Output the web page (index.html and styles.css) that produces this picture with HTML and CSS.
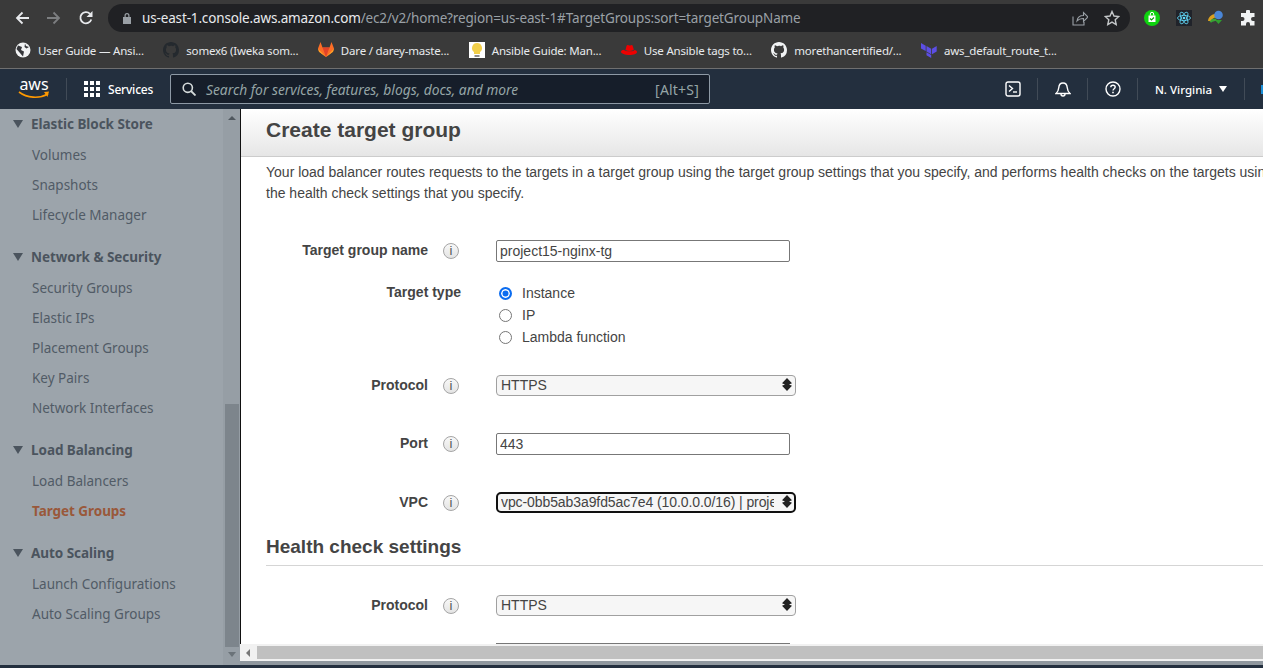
FILE: index.html
```html
<!DOCTYPE html>
<html>
<head>
<meta http-equiv="Content-Type" content="text/html; charset=utf-8"/>
<title>Create target group</title>
<link rel="stylesheet" href="styles.css">
</head>
<body>

<div class="browser">
  <div class="toolbar">
    <svg class="nav-icon" viewBox="0 0 16 16"><path d="M15 8H3M8.500 2.500 3 8l5.500 5.500" fill="none" stroke="#e8eaed" stroke-width="1.800"/></svg>
    <svg class="nav-icon" viewBox="0 0 16 16"><path d="M1 8h12M7.500 2.500 13 8l-5.500 5.500" fill="none" stroke="#7c7e80" stroke-width="1.800"/></svg>
    <svg class="nav-icon" viewBox="0 0 16 16"><path d="M13.300 9.500A5.600 5.600 0 1 1 12 3.800" fill="none" stroke="#e8eaed" stroke-width="1.800"/><path d="M14.500 1v6h-6z" fill="#e8eaed"/></svg>
    <div class="omnibox">
      <svg class="lock" viewBox="0 0 10 12"><path d="M2.500 5V3.500a2.500 2.500 0 0 1 5 0V5H9v7H1V5zM3.700 5h2.600V3.500a1.300 1.300 0 0 0-2.600 0z" fill="#9aa0a6"/></svg>
      <span class="url"><span class="url-host">us-east-1.console.aws.amazon.com</span>/ec2/v2/home?region=us-east-1#TargetGroups:sort=targetGroupName</span>
      <svg class="omni-icon" viewBox="0 0 16 16"><path d="M1 6.500V15h11v-3M5 11c.5-3.500 3-5.500 6.500-5.500V2.500L16 7l-4.500 4.500V8.500C8.500 8.500 6.500 9.300 5 11z" fill="none" stroke="#9aa0a6" stroke-width="1.100"/></svg>
      <svg class="omni-icon" viewBox="0 0 16 16"><path d="m8 1.500 2 4.500 4.800.5-3.600 3.200 1 4.800L8 12.100l-4.200 2.400 1-4.800L1.200 6.500 6 6z" fill="none" stroke="#c4c7c9" stroke-width="1.400"/></svg>
    </div>
    <div class="extensions">
      <svg class="ext" viewBox="0 0 16 16"><circle cx="8" cy="8" r="8" fill="#0fd30f"/><path d="M4.500 5.500h7v6.500h-7z" fill="#fff"/><path d="M6.300 5.500V4a1.700 1.700 0 0 1 3.400 0v1.500" fill="none" stroke="#fff"/><path d="m6 8.500 1.500 1.500 2.500-2.500" fill="none" stroke="#0b9a0b" stroke-width="1.100"/></svg>
      <svg class="ext" viewBox="0 0 16 16"><rect width="16" height="16" fill="#20232a"/><g fill="none" stroke="#61dafb" stroke-width=".8"><ellipse cx="8" cy="8" rx="6.500" ry="2.600"/><ellipse cx="8" cy="8" rx="6.500" ry="2.600" transform="rotate(60 8 8)"/><ellipse cx="8" cy="8" rx="6.500" ry="2.600" transform="rotate(120 8 8)"/></g><circle cx="8" cy="8" r="1.300" fill="#61dafb"/></svg>
      <svg class="ext" viewBox="0 0 16 16"><path d="M0 11c.5-4 3-6.500 7-7l1.500 3.500c-3 0-4.500 1.200-5.500 3.500z" fill="#d9a020"/><path d="M1.500 12C2.500 9.500 4.500 8.500 8 8.500l1 2.500c-3 0-4.500.5-5.500 1.500z" fill="#3aa335"/><circle cx="10.500" cy="5" r="4.300" fill="#4a86d8"/><path d="M7 10h7l-3.500 4z" fill="#2f9e2f"/></svg>
      <svg class="ext" viewBox="0 0 16 16"><path d="M6 1.500a2 2 0 0 1 4 0V3h4.500v4H13a2 2 0 0 0 0 4h1.500v4.500H10V14a2 2 0 0 0-4 0v1.500H1V11h1.500a2 2 0 0 0 0-4H1V3h5z" fill="#f1f3f4"/></svg>
    </div>
  </div>

  <div class="bookmarks">
    <div class="bookmark">
      <svg class="fav" viewBox="0 0 16 16"><circle cx="8" cy="8" r="7.500" fill="#f1f3f4"/><path d="M3 3.500 7 5 6 8l3 1.500-1 5L5 11 1.500 7zM10 1.500l1 2.500 3 1-2.500 1.500L9.500 5z" fill="#35363a"/></svg>
      <span>User Guide — Ansi...</span>
    </div>
    <div class="bookmark">
      <svg class="fav" viewBox="0 0 16 16"><path d="M8 0C3.580 0 0 3.580 0 8c0 3.540 2.290 6.530 5.470 7.590.4.070.55-.17.550-.38v-1.340c-2.230.48-2.690-1.070-2.690-1.070-.36-.930-.89-1.170-.89-1.170-.73-.5.050-.49.050-.49.800.060 1.230.83 1.230.83.710 1.220 1.870.87 2.330.66.070-.52.280-.87.510-1.070-1.780-.2-3.640-.89-3.640-3.950 0-.87.310-1.590.820-2.150-.080-.2-.360-1.020.080-2.120 0 0 .67-.21 2.200.82A7.600 7.600 0 0 1 8 3.870c.68 0 1.360.090 2 .27 1.530-1.040 2.200-.82 2.200-.82.440 1.100.160 1.920.080 2.120.51.560.820 1.270.820 2.150 0 3.070-1.870 3.750-3.650 3.950.290.250.540.730.540 1.480v2.190c0 .21.150.460.550.38A8 8 0 0 0 16 8c0-4.420-3.580-8-8-8z" fill="#24292e"/></svg>
      <span>somex6 (Iweka som...</span>
    </div>
    <div class="bookmark">
      <svg class="fav" viewBox="0 0 16 16"><path d="M8 15 1 9.800 0 6.500 2.500 0l2 5.500h7l2-5.500L16 6.500l-1 3.300z" fill="#fc6d26"/><path d="M8 15 4.500 5.500h7z" fill="#e24329"/><path d="M8 15 0 6.500l1 3.300zM8 15l8-8.500-1 3.300z" fill="#fca326"/></svg>
      <span>Dare / darey-maste...</span>
    </div>
    <div class="bookmark">
      <svg class="fav" viewBox="0 0 16 16"><rect width="16" height="16" fill="#fff"/><path d="M8 1a5 5 0 0 1 3 9v2H5v-2A5 5 0 0 1 8 1z" fill="#f2cf4a"/><path d="M5.500 13h5v2h-5z" fill="#8a8a8a"/></svg>
      <span>Ansible Guide: Man...</span>
    </div>
    <div class="bookmark">
      <svg class="fav" viewBox="0 0 16 16"><path d="M4.500 8 5.500 4c.3-1 1-1.200 2-.8 1 .4 1.500.4 2.500 0 1-.3 1.500 0 1.800 1l1 3.300C11 9.500 7 9 4.500 8z" fill="#e00"/><path d="M3 7.700C1 8 0 8.700 0 9.700 0 11.500 4 13 8.500 13c4 0 7.500-1 7.500-3 0-1-1-1.700-2.500-2-.2 2-10 1.500-10.500-.3z" fill="#e00"/></svg>
      <span>Use Ansible tags to...</span>
    </div>
    <div class="bookmark">
      <svg class="fav" viewBox="0 0 16 16"><path d="M8 0C3.580 0 0 3.580 0 8c0 3.540 2.290 6.530 5.470 7.590.4.070.55-.17.550-.38v-1.340c-2.230.48-2.690-1.070-2.690-1.070-.36-.930-.89-1.170-.89-1.170-.73-.5.050-.49.050-.49.800.060 1.230.83 1.230.83.710 1.220 1.870.87 2.330.66.070-.52.280-.87.510-1.070-1.780-.2-3.640-.89-3.640-3.950 0-.87.310-1.590.820-2.150-.080-.2-.360-1.020.080-2.120 0 0 .67-.21 2.200.82A7.600 7.600 0 0 1 8 3.870c.68 0 1.360.090 2 .27 1.530-1.040 2.200-.82 2.200-.82.440 1.100.160 1.920.080 2.120.51.560.820 1.270.820 2.150 0 3.070-1.870 3.750-3.650 3.950.290.250.540.730.540 1.480v2.190c0 .21.150.460.550.38A8 8 0 0 0 16 8c0-4.420-3.580-8-8-8z" fill="#f1f3f4"/></svg>
      <span>morethancertified/...</span>
    </div>
    <div class="bookmark">
      <svg class="fav" viewBox="0 0 16 16"><path d="M0 1l4.700 2.700v5.400L0 6.400zM5.500 4.100l4.700 2.700v5.400L5.500 9.500zM11 6.800l4.700-2.700v5.400L11 12.200zM5.500 10.300l4.700 2.700V16l-4.700-2.700z" fill="#5c4ee5"/></svg>
      <span>aws_default_route_t...</span>
    </div>
  </div>
</div>

<div class="awsnav">
  <div class="aws-logo">
    <span class="aws-word">aws</span>
    <svg class="aws-smile" viewBox="0 0 32 9"><path d="M1 1c8 6 20 7 29 2" fill="none" stroke="#ff9900" stroke-width="1.600"/><path d="m26 1 5-.5L29.500 6z" fill="#ff9900"/></svg>
  </div>
  <div class="nav-sep"></div>
  <svg class="grid-icon" viewBox="0 0 16 16"><path d="M0 0h4v4H0zM6 0h4v4H6zM12 0h4v4h-4zM0 6h4v4H0zM6 6h4v4H6zM12 6h4v4h-4zM0 12h4v4H0zM6 12h4v4H6zM12 12h4v4h-4z" fill="#fff"/></svg>
  <span class="services">Services</span>
  <div class="search">
    <svg class="search-icon" viewBox="0 0 14 14"><circle cx="5.800" cy="5.800" r="4.600" fill="none" stroke="#d5dbdb" stroke-width="1.600"/><path d="m9 9 4.500 4.500" stroke="#d5dbdb" stroke-width="1.800"/></svg>
    <span class="search-text">Search for services, features, blogs, docs, and more</span>
    <span class="search-key">[Alt+S]</span>
  </div>
  <div class="nav-right">
    <div class="nav-cell">
      <svg class="nav-glyph" viewBox="0 0 16 16"><rect x="1" y="1" width="14" height="14" rx="2" fill="none" stroke="#fff" stroke-width="1.400"/><path d="m4 4.500 3.500 3-3.500 3" fill="none" stroke="#fff" stroke-width="1.400"/><path d="M8 11h4" stroke="#fff" stroke-width="1.400"/></svg>
    </div>
    <div class="nav-cell">
      <svg class="nav-glyph" viewBox="0 0 16 16"><path d="M1 12.500c2-1.500 2.500-3 2.800-6C4 3.500 6 2 8 2s4 1.500 4.200 4.500c.3 3 .8 4.500 2.800 6z" fill="none" stroke="#fff" stroke-width="1.400"/><path d="M6 13a2 2 0 0 0 4 0" fill="none" stroke="#fff" stroke-width="1.400"/></svg>
    </div>
    <div class="nav-cell">
      <svg class="nav-glyph" viewBox="0 0 16 16"><circle cx="8" cy="8" r="7" fill="none" stroke="#fff" stroke-width="1.400"/><path d="M5.800 6.200C5.800 5 6.800 4.200 8 4.200c1.300 0 2.200.8 2.200 1.900 0 1.700-2.200 1.700-2.200 3.500" fill="none" stroke="#fff" stroke-width="1.400"/><path d="M7.200 10.700h1.600v1.500H7.200z" fill="#fff"/></svg>
    </div>
    <div class="nav-cell region">N. Virginia <span class="caret"></span></div>
    <div class="nav-cell account"><span class="account-edge"></span></div>
  </div>
</div>

<div class="workspace">
  <div class="sidebar">
    <div class="side-list">
      <div class="side-group first"><span class="tri"></span>Elastic Block Store</div>
      <div class="side-item">Volumes</div>
      <div class="side-item">Snapshots</div>
      <div class="side-item">Lifecycle Manager</div>
      <div class="side-group"><span class="tri"></span>Network &amp; Security</div>
      <div class="side-item">Security Groups</div>
      <div class="side-item">Elastic IPs</div>
      <div class="side-item">Placement Groups</div>
      <div class="side-item">Key Pairs</div>
      <div class="side-item">Network Interfaces</div>
      <div class="side-group"><span class="tri"></span>Load Balancing</div>
      <div class="side-item">Load Balancers</div>
      <div class="side-item active">Target Groups</div>
      <div class="side-group"><span class="tri"></span>Auto Scaling</div>
      <div class="side-item">Launch Configurations</div>
      <div class="side-item">Auto Scaling Groups</div>
    </div>
    <div class="side-scroll">
      <span class="arrow-up"></span>
      <div class="side-thumb"></div>
      <span class="arrow-down"></span>
    </div>
  </div>

  <div class="main">
    <div class="content">
      <div class="page-head">Create target group</div>
      <div class="intro">
        Your load balancer routes requests to the targets in a target group using the target group settings that you specify, and performs health checks on the targets using<br>
        the health check settings that you specify.
      </div>

      <div class="row row-name">
        <label class="field-label">Target group name</label>
        <span class="info">i</span>
        <input class="text-input" type="text" value="project15-nginx-tg">
      </div>

      <div class="row row-type">
        <label class="field-label wide">Target type</label>
        <div class="radios">
          <div class="radio-line"><span class="radio checked"></span>Instance</div>
          <div class="radio-line"><span class="radio"></span>IP</div>
          <div class="radio-line"><span class="radio"></span>Lambda function</div>
        </div>
      </div>

      <div class="row row-protocol">
        <label class="field-label">Protocol</label>
        <span class="info">i</span>
        <div class="select-box"><span class="select-text">HTTPS</span><span class="spinner"></span></div>
      </div>

      <div class="row row-port">
        <label class="field-label">Port</label>
        <span class="info">i</span>
        <input class="text-input" type="text" value="443">
      </div>

      <div class="row row-vpc">
        <label class="field-label">VPC</label>
        <span class="info">i</span>
        <div class="select-box focused"><span class="select-text">vpc-0bb5ab3a9fd5ac7e4 (10.0.0.0/16) | project15-vpc</span><span class="spinner"></span></div>
      </div>

      <h2 class="section-title">Health check settings</h2>

      <div class="row row-health">
        <label class="field-label">Protocol</label>
        <span class="info">i</span>
        <div class="select-box"><span class="select-text">HTTPS</span><span class="spinner"></span></div>
      </div>

      <div class="row row-path">
        <div class="cut-input"></div>
      </div>
    </div>
    <div class="hscroll">
      <span class="arrow-left"></span>
      <div class="hthumb"></div>
    </div>
    <div class="main-foot"></div>
  </div>
</div>

<div class="bottom-strip"></div>

</body>
</html>
```

FILE: styles.css
```css
html, body {
  margin: 0;
  height: 100%;
  overflow: hidden;
}

body {
  display: flex;
  flex-direction: column;
  background-color: #fff;
  font-family: "Liberation Sans", sans-serif;
  font-size: 14px;
}

/* browser chrome */
.browser {
  height: 68px;
  flex: none;
  background-color: #3a3a3a;
  border-bottom: 1px solid #6f6f6f;
  font-family: "Noto Sans", sans-serif;
}

.toolbar {
  height: 36px;
  display: flex;
  align-items: center;
}

.nav-icon {
  width: 16px;
  height: 16px;
  margin-left: 14px;
  margin-right: 2px;
}

.omnibox {
  height: 28px;
  width: 1022px;
  margin-left: 12px;
  display: flex;
  align-items: center;
  background-color: #202124;
  border-radius: 14px;
  color: #9aa0a6;
  font-size: 13.5px;
  box-sizing: border-box;
  padding-left: 14px;
}

.lock {
  width: 10px;
  height: 12px;
  margin-right: 10px;
}

.url {
  flex: 1;
  white-space: nowrap;
  letter-spacing: -0.15px;
}

.url-host {
  color: #e8eaed;
}

.omni-icon {
  width: 16px;
  height: 16px;
  margin-right: 16px;
}

.omni-icon:last-child {
  margin-right: 10px;
}

.extensions {
  display: flex;
  align-items: center;
  margin-left: 14px;
  gap: 16px;
}

.ext {
  width: 16px;
  height: 16px;
}

.bookmarks {
  height: 28px;
  display: flex;
  align-items: center;
  padding-left: 15px;
  color: #e8eaed;
  font-size: 11.5px;
  letter-spacing: -0.2px;
}

.bookmark {
  display: flex;
  align-items: center;
  white-space: nowrap;
  margin-right: 19.5px;
}

.fav {
  width: 16px;
  height: 16px;
  margin-right: 7px;
}

/* aws console nav */
.awsnav {
  height: 40px;
  flex: none;
  display: flex;
  align-items: center;
  background-color: #232f3e;
  font-family: "Noto Sans", sans-serif;
  color: #fff;
}

.aws-logo {
  width: 32px;
  margin-left: 18px;
  display: flex;
  flex-direction: column;
  align-items: center;
}

.aws-word {
  font-size: 16px;
  line-height: 13px;
}

.aws-smile {
  width: 32px;
  height: 9px;
}

.nav-sep {
  width: 1px;
  height: 22px;
  margin-left: 16px;
  background-color: #414b57;
}

.grid-icon {
  width: 16px;
  height: 16px;
  margin-left: 17px;
}

.services {
  margin-left: 8px;
  font-size: 12px;
  font-weight: 500;
  letter-spacing: -0.2px;
  width: 46px;
  white-space: nowrap;
}

.search {
  width: 540px;
  height: 30px;
  box-sizing: border-box;
  margin-left: 16px;
  display: flex;
  align-items: center;
  padding: 0 10px 0 11px;
  background-color: #161e2a;
  border: 1px solid #8d99a5;
  border-radius: 2px;
  color: #95a5a6;
  font-size: 13.8px;
}

.search-icon {
  width: 14px;
  height: 14px;
  margin-right: 10px;
}

.search-text {
  flex: 1;
  font-style: italic;
  white-space: nowrap;
}

.search-key {
  font-size: 14px;
  letter-spacing: 0.2px;
}

.nav-right {
  display: flex;
  align-items: center;
  margin-left: auto;
}

.nav-cell {
  height: 22px;
  width: 49px;
  border-right: 1px solid #414b57;
  display: flex;
  align-items: center;
  justify-content: center;
}

.nav-glyph {
  width: 16px;
  height: 16px;
}

.region {
  width: 106px;
  font-size: 11.5px;
  font-weight: 500;
  white-space: nowrap;
}

.caret {
  margin-left: 7px;
  border-left: 4px solid transparent;
  border-right: 4px solid transparent;
  border-top: 6px solid #fff;
}

.account {
  width: 18px;
  border-right: none;
  justify-content: flex-end;
}

.account-edge {
  width: 2px;
  height: 9px;
  background-color: #1a8fd8;
}

/* sidebar */
.workspace {
  flex: 1;
  min-height: 0;
  display: flex;
}

.sidebar {
  width: 240px;
  flex: none;
  display: flex;
  background-color: #9ca4ab;
  font-family: "Noto Sans", sans-serif;
}

.side-list {
  flex: 1;
  padding-left: 13px;
  overflow: hidden;
}

.side-group {
  margin-top: 17px;
  height: 20px;
  line-height: 20px;
  font-size: 13.5px;
  font-weight: 700;
  letter-spacing: -0.05px;
  color: #4b545e;
  white-space: nowrap;
  display: flex;
  align-items: center;
}

.side-group.first {
  margin-top: 5px;
}

.tri {
  border-left: 5px solid transparent;
  border-right: 5px solid transparent;
  border-top: 8px solid #4b545e;
  margin-right: 8px;
}

.side-item {
  margin-left: 19px;
  height: 30px;
  line-height: 30px;
  font-size: 13.5px;
  color: #515b66;
  white-space: nowrap;
}

.side-group + .side-item {
  margin-top: 6px;
}

.side-item.active {
  color: #99583a;
  font-weight: 700;
  letter-spacing: -0.05px;
}

.side-scroll {
  width: 17px;
  flex: none;
  display: flex;
  flex-direction: column;
  align-items: center;
  background-color: #969ea5;
}

.arrow-up {
  margin-top: 7px;
  border-left: 4px solid transparent;
  border-right: 4px solid transparent;
  border-bottom: 4px solid #4f575e;
}

.side-thumb {
  width: 14px;
  height: 243px;
  margin-top: 284px;
  background-color: #7d858c;
}

.arrow-down {
  margin-top: 5px;
  border-left: 4px solid transparent;
  border-right: 4px solid transparent;
  border-top: 5px solid #6b7379;
}

/* main panel */
.main {
  flex: 1;
  min-width: 0;
  display: flex;
  flex-direction: column;
}

.content {
  flex: 1;
  min-height: 0;
  overflow: hidden;
  color: #444;
  border-left: 1px solid #111;
}

.page-head {
  height: 48px;
  box-sizing: border-box;
  padding-left: 25px;
  padding-top: 9px;
  background: linear-gradient(#fff, #e6e6e6);
  border-bottom: 1px solid #ccc;
  font-size: 21px;
  font-weight: 700;
  line-height: 24px;
}

.intro {
  margin-top: 5px;
  padding-left: 25px;
  line-height: 21px;
  white-space: nowrap;
}

.row {
  display: flex;
  align-items: center;
}

.field-label {
  width: 187px;
  text-align: right;
  font-weight: 700;
  color: #444;
  flex: none;
  white-space: nowrap;
}

.field-label.wide {
  width: 220px;
}

.info {
  width: 16px;
  height: 16px;
  box-sizing: border-box;
  margin-left: 15px;
  margin-right: 37px;
  margin-top: 2px;
  flex: none;
  border: 1px solid #a5a5a5;
  border-radius: 50%;
  background: linear-gradient(#f8f8f8, #e4e4e4);
  color: #555;
  font-size: 13px;
  line-height: 14px;
  text-align: center;
}

.text-input {
  width: 294px;
  height: 22px;
  box-sizing: border-box;
  margin-top: 1px;
  margin-bottom: -1px;
  padding: 0 3px;
  border: 1px solid #777;
  border-radius: 2px;
  font-family: "Liberation Sans", sans-serif;
  font-size: 14px;
  color: #444;
  background-color: #fff;
}

.select-box {
  width: 300px;
  height: 21px;
  box-sizing: border-box;
  margin-top: 1px;
  margin-bottom: -1px;
  padding: 0 3px 0 4px;
  display: flex;
  align-items: center;
  border: 1px solid #a0a0a0;
  border-radius: 4px;
  background-color: #f6f6f6;
  color: #444;
}

.select-box.focused {
  border: 2px solid #111;
  border-radius: 5px;
  padding: 0 2px 0 3px;
}

.select-text {
  width: 273px;
  flex: none;
  overflow: hidden;
  white-space: nowrap;
  padding-bottom: 1px;
}

.focused .select-text {
  letter-spacing: -0.09px;
}

.spinner {
  width: 10px;
  height: 13px;
  margin-left: auto;
  margin-bottom: 2px;
  background-color: #222;
  clip-path: polygon(50% 0, 100% 40%, 70% 50%, 100% 60%, 50% 100%, 0 60%, 30% 50%, 0 40%);
}

.row-name {
  margin-top: 35px;
}

.row-type {
  margin-top: 21px;
  align-items: flex-start;
}

.row-type .field-label {
  line-height: 20px;
}

.radios {
  margin-left: 36px;
}

.radio-line {
  height: 22px;
  display: flex;
  align-items: center;
  color: #444;
}

.radio {
  width: 13px;
  height: 13px;
  box-sizing: border-box;
  margin-right: 10px;
  margin-left: 2px;
  border: 1px solid #767676;
  border-radius: 50%;
  background-color: #fff;
}

.radio.checked {
  border: 2px solid #0b6cf0;
  box-shadow: inset 0 0 0 1.500px #fff;
  background-color: #0b6cf0;
}

.row-protocol {
  margin-top: 26px;
}

.row-port {
  margin-top: 37px;
}

.row-vpc {
  margin-top: 37px;
}

.section-title {
  margin: 24px 0 0 25px;
  padding-bottom: 7px;
  border-bottom: 1px solid #d5d5d5;
  font-size: 19px;
  font-weight: 700;
  line-height: 22px;
  color: #444;
}

.row-health {
  margin-top: 28px;
}

.row-path {
  margin-top: 28px;
  padding-left: 255px;
}

.cut-input {
  width: 294px;
  height: 22px;
  border-top: 1px solid #777;
}

.hscroll {
  height: 17px;
  flex: none;
  display: flex;
  align-items: center;
  background-color: #f1f1f1;
  box-sizing: border-box;
  padding-left: 1px;
}

.arrow-left {
  margin-left: 5px;
  border-top: 4px solid transparent;
  border-bottom: 4px solid transparent;
  border-right: 4px solid #777;
}

.hthumb {
  flex: 1;
  height: 13px;
  margin-left: 7px;
  background-color: #c0c0c0;
}

.main-foot {
  height: 4px;
  flex: none;
  background-color: #8f979e;
}

.bottom-strip {
  height: 3px;
  flex: none;
  background-color: #232f3e;
}
```
